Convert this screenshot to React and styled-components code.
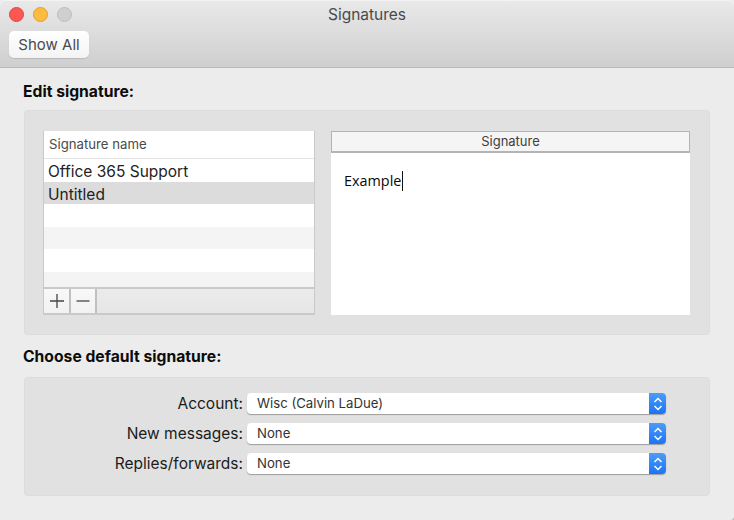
import React from 'react'
import styled, { createGlobalStyle } from 'styled-components'

const GlobalStyle = createGlobalStyle`
    html, body {
        margin: 0;
        padding: 0;
        background: #bdbdbd;
    }
    body {
        font-family: "Inter", "Liberation Sans", sans-serif;
        color: #1c1c1c;
    }
`

const rows = [
    { name: 'Office 365 Support' },
    { name: 'Untitled', selected: true },
    {},
    { striped: true },
    {},
    { striped: true, short: true },
]

const accounts = [
    { label: 'Account:', value: 'Wisc (Calvin LaDue)' },
    { label: 'New messages:', value: 'None' },
    { label: 'Replies/forwards:', value: 'None' },
]

const Chevrons = () => (
    <svg width="10" height="16" viewBox="0 0 10 16" fill="none" stroke="#fff" strokeWidth="1.5">
        <path d="M1.5 6 L5 2.5 L8.5 6" />
        <path d="M1.5 10 L5 13.5 L8.5 10" />
    </svg>
)

const App = () => (
    <Window>
        <GlobalStyle />
        <TitleBar>
            <Lights>
                <Light color="#fc5753" edge="#df4744" />
                <Light color="#fdbc40" edge="#de9f34" />
                <Light color="#cfcfcf" edge="#bdbdbd" />
            </Lights>
            <Title>Signatures</Title>
            <ShowAll>Show All</ShowAll>
        </TitleBar>
        <Content>
            <SectionTitle>Edit signature:</SectionTitle>
            <EditGroup>
                <ListPanel>
                    <ListHeader>Signature name</ListHeader>
                    <ListRows>
                        {rows.map((row, i) => (
                            <ListRow key={i} selected={row.selected} striped={row.striped} short={row.short}>
                                {row.name}
                            </ListRow>
                        ))}
                    </ListRows>
                    <ListFooter>
                        <SquareButton width="27px">
                            <svg width="14" height="14" viewBox="0 0 14 14" stroke="#444" strokeWidth="1.3">
                                <path d="M0 7 H14 M7 0 V14" />
                            </svg>
                        </SquareButton>
                        <SquareButton width="26px">
                            <svg width="14" height="14" viewBox="0 0 14 14" stroke="#444" strokeWidth="1.3">
                                <path d="M0.5 7 H13.5" />
                            </svg>
                        </SquareButton>
                    </ListFooter>
                </ListPanel>
                <EditorPanel>
                    <EditorHeader>Signature</EditorHeader>
                    <EditorBody>
                        <EditorText>Example</EditorText>
                        <Caret />
                    </EditorBody>
                </EditorPanel>
            </EditGroup>
            <SectionTitle second>Choose default signature:</SectionTitle>
            <DefaultGroup>
                {accounts.map(account => (
                    <FieldRow key={account.label}>
                        <FieldLabel>{account.label}</FieldLabel>
                        <Select>
                            <SelectValue>{account.value}</SelectValue>
                            <SelectArrow><Chevrons /></SelectArrow>
                        </Select>
                    </FieldRow>
                ))}
            </DefaultGroup>
        </Content>
    </Window>
)

export default App

const Window = styled.div`
    width: 734px;
    height: 520px;
    overflow: hidden;
    background: #ececec;
    border-bottom-right-radius: 4px;
`

const TitleBar = styled.div`
    position: relative;
    box-sizing: border-box;
    height: 68px;
    padding: 7px 9px 0;
    border-radius: 5px 5px 0 0;
    background: linear-gradient(#e9e9e9, #cfcfcf);
    border-bottom: 1px solid #b9b9b9;
    box-shadow: inset 0 1px 0 #f4f4f4;
`

const Lights = styled.div`
    display: flex;
    gap: 9px;
`

const Light = styled.span`
    box-sizing: border-box;
    width: 15px;
    height: 15px;
    border-radius: 50%;
    background: ${props => props.color};
    border: 1px solid ${props => props.edge};
`

const Title = styled.div`
    position: absolute;
    top: 6px;
    left: 0;
    right: 0;
    text-align: center;
    font-size: 15.5px;
    line-height: 17px;
    color: #4a4a4a;
`

const ShowAll = styled.div`
    box-sizing: border-box;
    width: 80px;
    height: 27px;
    margin-top: 9px;
    border-radius: 5px;
    background: linear-gradient(#ffffff, #f3f3f3);
    box-shadow: 0 1px 1px rgba(0, 0, 0, 0.12);
    font-size: 15px;
    line-height: 27px;
    text-align: center;
    color: #4b4b4b;
`

const Content = styled.div`
    padding: 0 24px;
`

const SectionTitle = styled.div`
    height: 42px;
    margin-left: -1px;
    padding-top: ${props => props.second ? '13px' : '15px'};
    box-sizing: border-box;
    font-size: 15.7px;
    line-height: 18px;
    font-weight: 700;
    color: #0c0c0c;
`

const Group = styled.div`
    box-sizing: border-box;
    border-radius: 4px;
    background: #e1e1e1;
    border: 1px solid #dcdcdc;
`

const EditGroup = styled(Group)`
    display: flex;
    height: 225px;
    padding: 20px 19px 19px 18px;
    gap: 16px;
`

const ListPanel = styled.div`
    display: flex;
    flex-direction: column;
    box-sizing: border-box;
    width: 272px;
    height: 184px;
    border: 1px solid #c9c9c9;
    border-top: 0;
    background: #fff;
`

const ListHeader = styled.div`
    box-sizing: border-box;
    height: 28px;
    padding: 0 5px;
    border-bottom: 1px solid #e4e4e4;
    font-size: 13.2px;
    line-height: 27px;
    color: #4a4a4a;
`

const ListRows = styled.div`
    flex: 1;
    overflow: hidden;
`

const ListRow = styled.div`
    box-sizing: border-box;
    height: ${props => props.short ? '15px' : '22.6px'};
    padding: 2px 4px 0;
    font-size: 15.5px;
    line-height: 22px;
    color: #222;
    background: ${props => props.selected ? '#dcdcdc' : props.striped ? '#f4f4f4' : '#fff'};
`

const ListFooter = styled.div`
    display: flex;
    box-sizing: border-box;
    height: 27px;
    border-top: 2px solid #c9c9c9;
    border-bottom: 1px solid #c9c9c9;
    background: linear-gradient(#ebebeb, #e6e6e6);
`

const SquareButton = styled.div`
    display: flex;
    align-items: center;
    justify-content: center;
    box-sizing: border-box;
    width: ${props => props.width};
    border-right: 2px solid #c0c0c0;
    background: linear-gradient(#f8f8f8, #f2f2f2);
`

const EditorPanel = styled.div`
    display: flex;
    flex-direction: column;
    width: 359px;
    height: 184px;
    background: #fff;
`

const EditorHeader = styled.div`
    box-sizing: border-box;
    height: 22px;
    border: 1px solid #b4b4b4;
    border-bottom-width: 2px;
    background: #f5f5f5;
    font-size: 13px;
    line-height: 19px;
    text-align: center;
    color: #3f3f3f;
`

const EditorBody = styled.div`
    display: flex;
    align-items: flex-start;
    padding: 19px 0 0 13px;
`

const EditorText = styled.span`
    font-family: "Open Sans", "Liberation Sans", sans-serif;
    font-size: 14.4px;
    line-height: 18px;
    color: #0a0a0a;
`

const Caret = styled.span`
    width: 1px;
    height: 20px;
    margin-top: -1px;
    margin-left: 1px;
    background: #111;
`

const DefaultGroup = styled(Group)`
    display: flex;
    flex-direction: column;
    gap: 9px;
    height: 119px;
    padding: 15px 0 0;
`

const FieldRow = styled.div`
    display: flex;
    align-items: center;
    height: 21px;
`

const FieldLabel = styled.div`
    box-sizing: border-box;
    width: 218px;
    text-align: right;
    font-size: 15.5px;
    line-height: 23px;
    color: #1b1b1b;
`

const Select = styled.div`
    display: flex;
    width: 419px;
    height: 21px;
    margin-left: 4px;
    border-radius: 4px;
    overflow: hidden;
    background: #fff;
    box-shadow: 0 1px 1px rgba(0, 0, 0, 0.3);
`

const SelectValue = styled.div`
    flex: 1;
    padding-left: 10px;
    font-size: 13.2px;
    line-height: 21px;
    color: #333;
`

const SelectArrow = styled.div`
    display: flex;
    align-items: center;
    justify-content: center;
    width: 17px;
    background: linear-gradient(#4d9cf9, #1a74f5);
`
